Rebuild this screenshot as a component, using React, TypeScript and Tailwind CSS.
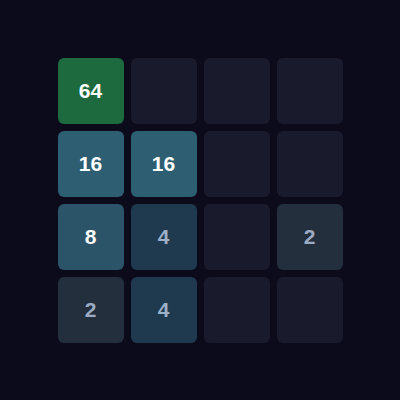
import React from "react";

type Cell = number | null;

const board: Cell[][] = [
  [64, null, null, null],
  [16, 16, null, null],
  [8, 4, null, 2],
  [2, 4, null, null],
];

const tileClass: Record<number, string> = {
  2: "bg-[#232f3d] text-[#9cabc2]",
  4: "bg-[#1f3a4e] text-[#9cb0c8]",
  8: "bg-[#2c5468] text-white",
  16: "bg-[#2d5e72] text-white",
  64: "bg-[#1d6a3f] text-white",
};

function Tile({ value }: { value: Cell }) {
  if (value === null) {
    return <div className="w-[66px] h-[66px] rounded-md bg-[#1a1a2d]" />;
  }
  return (
    <div
      className={`w-[66px] h-[66px] rounded-md flex items-center justify-center font-bold text-[21px] ${tileClass[value]}`}
    >
      {value}
    </div>
  );
}

export default function App() {
  return (
    <div
      className="w-[400px] h-[400px] bg-[#0b0b1c] flex items-center justify-center"
      style={{ fontFamily: '"Liberation Sans", Arial, sans-serif' }}
    >
      <div className="grid grid-cols-4 gap-[7px]">
        {board.flat().map((v, i) => (
          <Tile key={i} value={v} />
        ))}
      </div>
    </div>
  );
}
